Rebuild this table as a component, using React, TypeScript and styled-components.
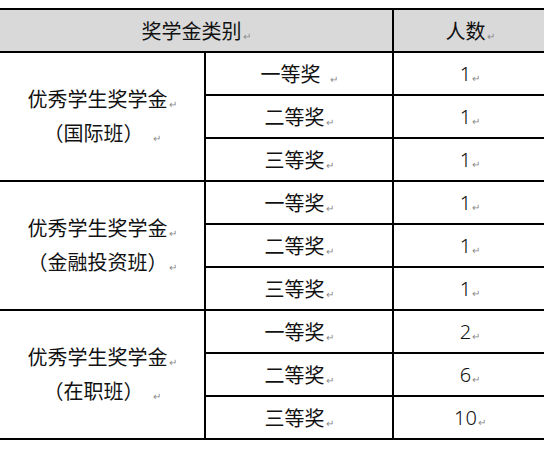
import React from 'react'
import styled, { createGlobalStyle } from 'styled-components'

type Group = {
  title: string
  sub: string
  subGap?: boolean
  rows: { level: string; count: string; gap?: boolean }[]
}

const groups: Group[] = [
  {
    title: '优秀学生奖学金',
    sub: '（国际班）',
    subGap: true,
    rows: [
      { level: '一等奖', count: '1', gap: true },
      { level: '二等奖', count: '1' },
      { level: '三等奖', count: '1' },
    ],
  },
  {
    title: '优秀学生奖学金',
    sub: '（金融投资班）',
    rows: [
      { level: '一等奖', count: '1' },
      { level: '二等奖', count: '1' },
      { level: '三等奖', count: '1' },
    ],
  },
  {
    title: '优秀学生奖学金',
    sub: '（在职班）',
    subGap: true,
    rows: [
      { level: '一等奖', count: '2' },
      { level: '二等奖', count: '6' },
      { level: '三等奖', count: '10' },
    ],
  },
]

const GlobalStyle = createGlobalStyle`
  body {
    margin: 0;
    background: #ffffff;
    font-family: "Noto Sans CJK SC", "Noto Sans", sans-serif;
  }
`

const Page = styled.div`
  width: 544px;
  height: 451px;
  overflow: hidden;
  padding-top: 8px;
  box-sizing: border-box;
`

const Table = styled.table`
  width: 548px;
  margin-left: -2px;
  border-collapse: collapse;
  table-layout: fixed;
  color: #111;
  font-size: 20px;
`

const HeadCell = styled.th`
  height: 41px;
  padding: 0;
  font-weight: 400;
  background: #d9d9d9;
  border: 2px solid #000;
  text-align: center;
  vertical-align: middle;
`

const Cell = styled.td`
  height: 41px;
  padding: 0;
  border: 2px solid #000;
  text-align: center;
  vertical-align: middle;
  line-height: 1;
`

const GroupCell = styled(Cell)`
  line-height: 29px;
  padding-top: 2px;
`

const Mark = styled.span<{ $gap?: boolean }>`
  font-size: 10px;
  color: #8a8a8a;
  margin-left: ${({ $gap }) => ($gap ? '9px' : '1px')};
  vertical-align: -1px;
`

const Num = styled.span`
  font-family: "Noto Sans", sans-serif;
  font-weight: 300;
`

export default function App() {
  return (
    <>
      <GlobalStyle />
      <Page>
        <Table>
          <colgroup>
            <col style={{ width: 206 }} />
            <col style={{ width: 188 }} />
            <col style={{ width: 154 }} />
          </colgroup>
          <thead>
            <tr>
              <HeadCell colSpan={2}>
                奖学金类别<Mark>↵</Mark>
              </HeadCell>
              <HeadCell>
                人数<Mark>↵</Mark>
              </HeadCell>
            </tr>
          </thead>
          <tbody>
            {groups.map((g, gi) =>
              g.rows.map((r, ri) => (
                <tr key={`${gi}-${ri}`}>
                  {ri === 0 && (
                    <GroupCell rowSpan={g.rows.length}>
                      {g.title}
                      <Mark>↵</Mark>
                      <br />
                      {g.sub}
                      <Mark $gap={g.subGap}>↵</Mark>
                    </GroupCell>
                  )}
                  <Cell>
                    {r.level}
                    <Mark $gap={r.gap}>↵</Mark>
                  </Cell>
                  <Cell>
                    <Num>{r.count}</Num>
                    <Mark>↵</Mark>
                  </Cell>
                </tr>
              ))
            )}
          </tbody>
        </Table>
      </Page>
    </>
  )
}
